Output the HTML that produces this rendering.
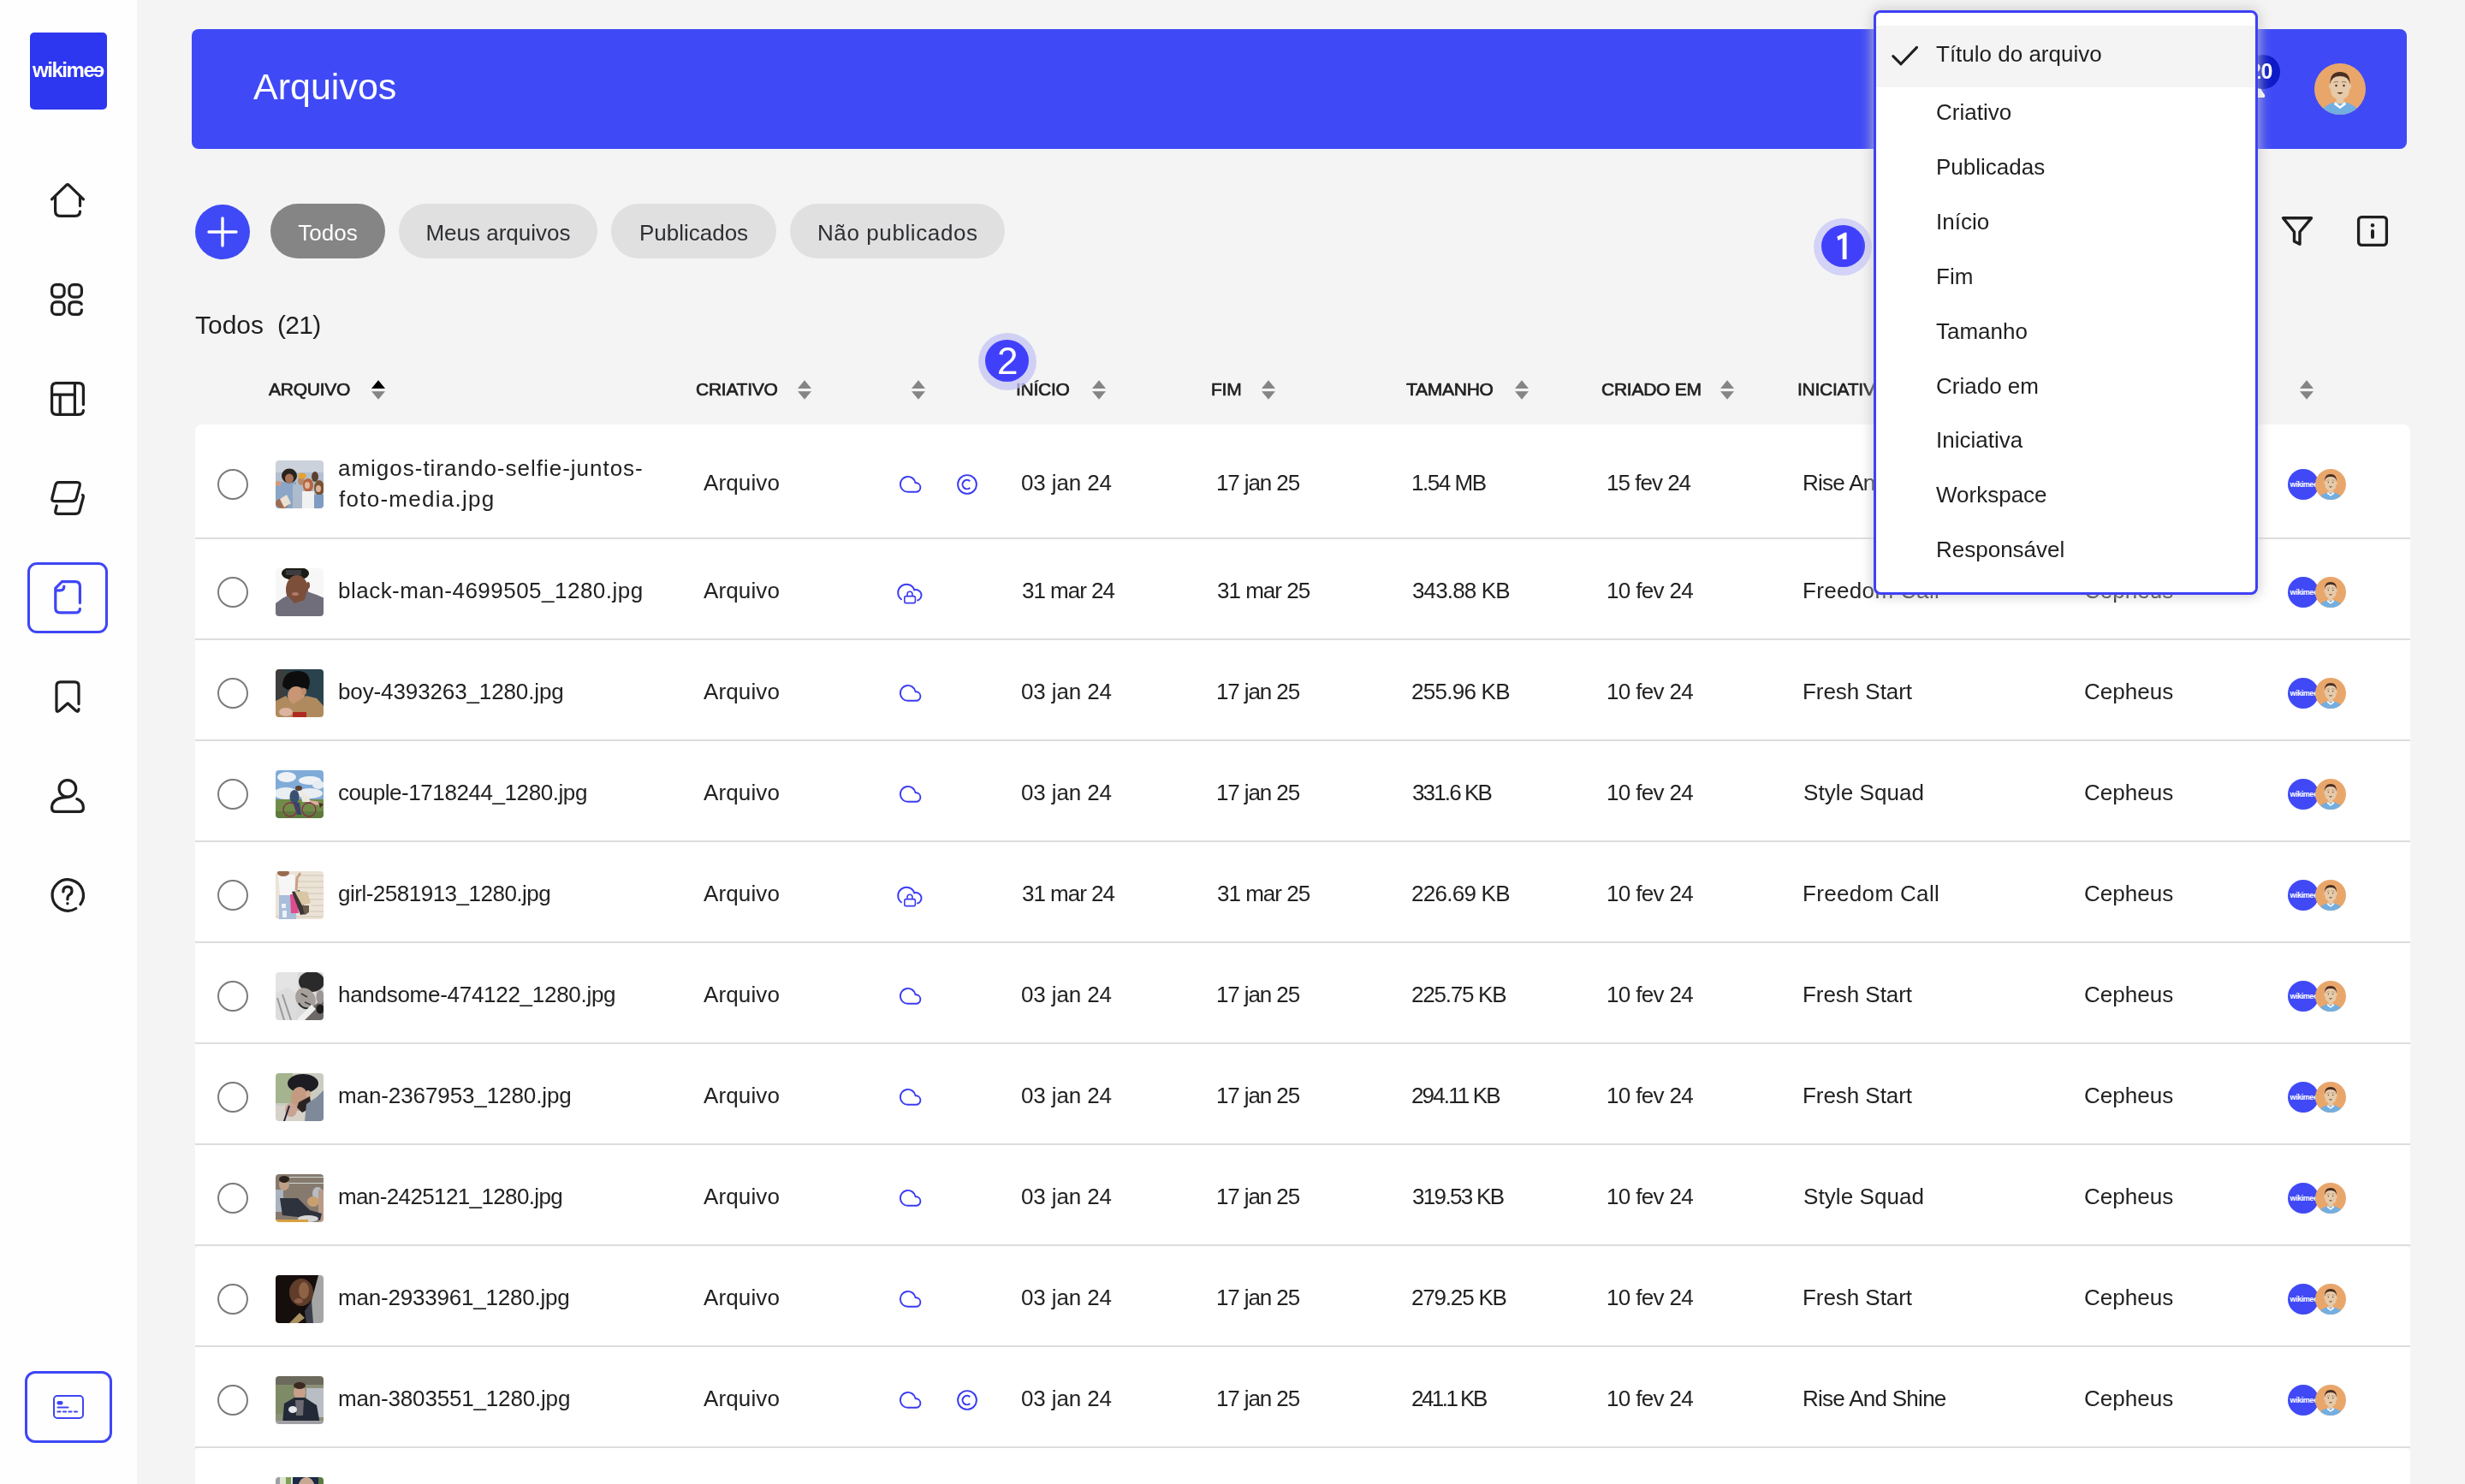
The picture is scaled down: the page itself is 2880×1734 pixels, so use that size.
<!DOCTYPE html><html><head><meta charset="utf-8"><style>html,body{margin:0;padding:0;}body{width:2880px;height:1734px;position:relative;overflow:hidden;background:#f4f4f4;font-family:"Liberation Sans", sans-serif;}.t{position:absolute;white-space:pre;-webkit-font-smoothing:antialiased;will-change:transform;}</style></head><body>
<div style="position:absolute;left:0px;top:0px;width:160px;height:1734px;background:#fefefe;"></div>
<div style="position:absolute;left:35px;top:38px;width:90px;height:90px;background:#2d37f0;border-radius:5px;"></div>
<div class="t" style="left:38.0px;top:70.3px;font-size:24px;line-height:24px;color:#fff;font-weight:700;letter-spacing:-1.45px;">wikime</div>
<div class="t" style="left:109.2px;top:70.3px;font-size:24px;line-height:24px;color:#fff;font-weight:700;letter-spacing:0px;"><span style="display:inline-block;transform:scaleX(-1)">e</span></div>
<svg style="position:absolute;left:59px;top:214px;overflow:visible" width="40" height="40" viewBox="0 0 40 40"><path fill="none" stroke="#1f1f1f" stroke-width="3.2" stroke-linecap="round" stroke-linejoin="round" d="M1.5 18.9 L18.2 2.6 Q20 0.9 21.8 2.6 L38.5 18.9 M5.6 15 V32.5 Q5.6 38.3 11.2 38.3 H28.8 Q34.5 38.3 34.5 33 M34.5 26.6 V15"/></svg>
<svg style="position:absolute;left:59px;top:331px;overflow:visible" width="38" height="38" viewBox="0 0 38 38"><g fill="none" stroke="#1f1f1f" stroke-width="3.2" stroke-linecap="round" stroke-linejoin="round"><rect x="1.6" y="1.6" width="14.5" height="14.5" rx="5"/><rect x="21.9" y="1.6" width="14.5" height="14.5" rx="5"/><rect x="1.6" y="21.9" width="14.5" height="14.5" rx="5"/><path d="M36.2 24.3 Q34.8 21.9 31 21.9 H27 Q21.9 21.9 21.9 27 V31.3 Q21.9 36.4 27 36.4 H31.3 Q36.4 36.4 36.4 31.2"/></g></svg>
<svg style="position:absolute;left:59px;top:446px;overflow:visible" width="40" height="40" viewBox="0 0 40 40"><g fill="none" stroke="#1f1f1f" stroke-width="3.2" stroke-linecap="round" stroke-linejoin="round" stroke-width="2.9"><path d="M38.4 26.7 V7 Q38.4 1.6 33 1.6 H7 Q1.6 1.6 1.6 7 V33 Q1.6 38.4 7 38.4 H33 Q38.4 38.4 38.4 33.5"/><path d="M1.6 15.2 H28.4 M11.2 15.2 V38.4 M28.4 1.6 V38.4"/></g></svg>
<svg style="position:absolute;left:59px;top:562px;overflow:visible" width="40" height="40" viewBox="0 0 40 40"><g fill="none" stroke="#1f1f1f" stroke-width="3.2" stroke-linecap="round" stroke-linejoin="round"><path d="M9.5 1.6 H31 Q35 1.6 34.2 5.5 L30.2 20 Q29.2 23.6 25.5 23.6 H4.8 Q1.2 23.6 1.9 20 L5.7 5.2 Q6.6 1.6 9.5 1.6 Z"/><path d="M7.3 29 L5.8 35 Q5.1 38.4 9 38.4 H29.5 Q33.2 38.4 34 35 L38.3 19 Q38.7 17 37.5 16.4"/></g></svg>
<div style="position:absolute;left:32px;top:657px;width:94px;height:83px;box-sizing:border-box;border:3px solid #3f46f5;border-radius:11px;"></div>
<svg style="position:absolute;left:63px;top:678px;overflow:visible" width="32" height="40" viewBox="0 0 32 40"><g fill="none" stroke="#3f46f5" stroke-width="3.2" stroke-linecap="round" stroke-linejoin="round"><path d="M30.4 26.4 V7 Q30.4 1.6 25 1.6 H9.4 L1.8 9.4 V32.4 Q1.8 37.8 7.2 37.8 H25 Q30.4 37.8 30.4 33.4"/><path d="M11.8 7 Q11.8 11.8 7.6 11.8 H3.6"/></g></svg>
<svg style="position:absolute;left:63px;top:794px;overflow:visible" width="32" height="40" viewBox="0 0 32 40"><path fill="none" stroke="#1f1f1f" stroke-width="3.2" stroke-linecap="round" stroke-linejoin="round" d="M29 28.6 V7.5 Q29 2.8 24.3 2.8 H7.7 Q3 2.8 3 7.5 V35 Q3 39 6.5 36.3 L16.1 27.8 L25.5 36.3 Q29 39 29 34.5"/></svg>
<svg style="position:absolute;left:59px;top:910px;overflow:visible" width="40" height="40" viewBox="0 0 40 40"><g fill="none" stroke="#1f1f1f" stroke-width="3.2" stroke-linecap="round" stroke-linejoin="round"><circle cx="19.9" cy="11.4" r="9.8"/><path d="M20 21.4 Q5.5 22 2.3 29.5 Q1.6 31.5 1.6 34 Q1.6 38.4 6 38.4 H33.8 Q38.4 38.4 38.4 34 Q38.4 26.5 30.8 23.6"/></g></svg>
<svg style="position:absolute;left:59px;top:1026px;overflow:visible" width="40" height="40" viewBox="0 0 40 40"><g fill="none" stroke="#1f1f1f" stroke-width="3.2" stroke-linecap="round" stroke-linejoin="round"><path d="M29.8 35.5 A18.2 18.2 0 1 1 34.9 30.8"/><path d="M14.9 15.9 Q14.9 10.2 20 10.2 Q25 10.2 25 15 Q25 18.5 21.5 20 Q19.9 21 19.9 24.8"/><circle cx="19.9" cy="29.7" r="1.7" fill="#1f1f1f" stroke="none"/></g></svg>
<div style="position:absolute;left:29px;top:1602px;width:102px;height:84px;box-sizing:border-box;border:3px solid #3f46f5;border-radius:12px;"></div>
<svg style="position:absolute;left:62px;top:1630px;overflow:visible" width="36" height="28" viewBox="0 0 36 28"><g fill="none" stroke="#3f46f5" stroke-width="2" stroke-linecap="round"><rect x="1" y="1" width="34" height="26" rx="4"/><path d="M5.5 14.5 H17.5"/><path d="M5.5 19.5 H8.5 M12 19.5 H15 M18.5 19.5 H21.5 M25 19.5 H28" stroke-width="2.2"/></g><rect x="4.5" y="7" width="7" height="4.5" rx="2.2" fill="#3f46f5"/></svg>
<div style="position:absolute;left:224px;top:34px;width:2588px;height:140px;background:#3f4af6;border-radius:8px;"></div>
<div class="t" style="left:296.0px;top:79.6px;font-size:43px;line-height:43px;color:#fff;font-weight:400;letter-spacing:0px;">Arquivos</div>
<svg style="position:absolute;left:2611px;top:78px;overflow:visible" width="40" height="40" viewBox="0 0 40 40"><path fill="#fff" d="M20 4 Q31 4 31 17 V27 L35 33 Q36 36 33 36 H7 Q4 36 5 33 L9 27 V17 Q9 4 20 4 Z"/></svg>
<div style="position:absolute;left:2624px;top:64px;width:40px;height:40px;background:#0d1ac8;border-radius:50%;"></div>
<div class="t" style="left:2628.0px;top:70.8px;font-size:25px;line-height:25px;color:#fff;font-weight:700;letter-spacing:-0.5px;">20</div>
<svg style="position:absolute;left:2704px;top:74px;overflow:visible" width="60" height="60" viewBox="0 0 60 60"><circle cx="30" cy="30" r="30" fill="#e9a66b"/>
<clipPath id="avh"><circle cx="30" cy="30" r="30"/></clipPath>
<g clip-path="url(#avh)">
<ellipse cx="30" cy="61" rx="23" ry="16" fill="#73aee0"/>
<rect x="25.5" y="37" width="9" height="10" fill="#e4c8a8"/>
<path d="M24 45 L30 50 L36 45 L37 48 L30 53 L23 48 Z" fill="#fff"/>
<ellipse cx="19" cy="27" rx="2" ry="3" fill="#e4c8a8"/>
<ellipse cx="41" cy="27" rx="2" ry="3" fill="#e4c8a8"/>
<path d="M19 22 Q19 11 30 11 Q41 11 41 22 V30 Q41 42 30 42 Q19 42 19 30 Z" fill="#e6caa9"/>
<path d="M18.5 24 Q18 10 30 10 Q42 10 41.5 24 Q40 15 30 15 Q20 15 18.5 24 Z" fill="#4a2f22"/>
<circle cx="25.5" cy="26" r="1.2" fill="#3a2a20"/><circle cx="34.5" cy="26" r="1.2" fill="#3a2a20"/><path d="M22.5 22.5 Q25.5 20.5 28 22 M32 22 Q34.5 20.5 37.5 22.5" stroke="#8a6a50" stroke-width="0.9" fill="none"/>
<path d="M26.5 34 Q30 37.5 33.5 34 Z" fill="#3a2a20"/>
</g></svg>
<div style="position:absolute;left:228px;top:239px;width:64px;height:64px;background:#3f4af6;border-radius:50%;"></div>
<svg style="position:absolute;left:228px;top:239px;overflow:visible" width="64" height="64" viewBox="0 0 64 64"><path d="M32 16 V48 M16 32 H48" stroke="#fff" stroke-width="3.4" stroke-linecap="round"/></svg>
<div style="position:absolute;left:316px;top:238px;width:134px;height:64px;background:#858585;border-radius:32px;"></div>
<div class="t" style="left:316px;top:258.5px;width:134px;text-align:center;font-size:26px;line-height:26px;color:#fff;letter-spacing:0px;text-indent:0px;">Todos</div>
<div style="position:absolute;left:466px;top:238px;width:232px;height:64px;background:#e0e0e0;border-radius:32px;"></div>
<div class="t" style="left:466px;top:258.5px;width:232px;text-align:center;font-size:26px;line-height:26px;color:#2e2f33;letter-spacing:0px;text-indent:0px;">Meus arquivos</div>
<div style="position:absolute;left:714px;top:238px;width:193px;height:64px;background:#e0e0e0;border-radius:32px;"></div>
<div class="t" style="left:714px;top:258.5px;width:193px;text-align:center;font-size:26px;line-height:26px;color:#2e2f33;letter-spacing:0px;text-indent:0px;">Publicados</div>
<div style="position:absolute;left:923px;top:238px;width:251px;height:64px;background:#e0e0e0;border-radius:32px;"></div>
<div class="t" style="left:923px;top:258.5px;width:251px;text-align:center;font-size:26px;line-height:26px;color:#2e2f33;letter-spacing:0.6px;text-indent:0.6px;">Não publicados</div>
<div style="position:absolute;left:2119px;top:255px;width:68px;height:67px;background:#d3d3f7;border-radius:50%;"></div>
<div style="position:absolute;left:2128px;top:263px;width:51px;height:49px;background:#4040fb;border-radius:50%;"></div>
<svg style="position:absolute;left:2140px;top:266px;overflow:visible" width="30" height="42" viewBox="0 0 30 42"><path d="M6.3 10.6 L15.2 5.7 H17.5 V36.9 H12.7 V12.2 L7.6 15 Z" fill="#fff"/></svg>
<svg style="position:absolute;left:2664px;top:251px;overflow:visible" width="40" height="40" viewBox="0 0 40 40"><path d="M3.5 3.8 H36.5 L23 20 V34.2 L16.5 31 V20 Z" fill="none" stroke="#1f1f1f" stroke-width="3.4" stroke-linejoin="round"/></svg>
<svg style="position:absolute;left:2752px;top:250px;overflow:visible" width="40" height="40" viewBox="0 0 40 40"><rect x="3.6" y="3.6" width="32.8" height="32.8" rx="3.6" fill="none" stroke="#1f1f1f" stroke-width="3.3"/><circle cx="20" cy="13.2" r="2.2" fill="#1f1f1f"/><path d="M20 20 V27" stroke="#1f1f1f" stroke-width="4" stroke-linecap="round"/></svg>
<div class="t" style="left:228.0px;top:365.0px;font-size:30px;line-height:30px;color:#1f1f1f;font-weight:400;letter-spacing:0px;">Todos</div>
<div class="t" style="left:324.0px;top:365.0px;font-size:30px;line-height:30px;color:#1f1f1f;font-weight:400;letter-spacing:-0.7px;">(21)</div>
<div class="t" style="left:314.0px;top:444.2px;font-size:21px;line-height:21px;color:#222;font-weight:400;letter-spacing:-0.25px;-webkit-text-stroke:0.7px #222;">ARQUIVO</div>
<svg style="position:absolute;left:434px;top:444px;overflow:visible" width="16" height="24" viewBox="0 0 16 24"><path d="M8 0.3 L16 9.9 H0 Z" fill="#000"/><path d="M0 13.2 H16 L8 22.8 Z" fill="#858585"/></svg>
<div class="t" style="left:813.0px;top:444.2px;font-size:21px;line-height:21px;color:#222;font-weight:400;letter-spacing:-0.25px;-webkit-text-stroke:0.7px #222;">CRIATIVO</div>
<svg style="position:absolute;left:932px;top:444px;overflow:visible" width="16" height="24" viewBox="0 0 16 24"><path d="M8 0.3 L16 9.9 H0 Z" fill="#858585"/><path d="M0 13.2 H16 L8 22.8 Z" fill="#858585"/></svg>
<svg style="position:absolute;left:1065px;top:444px;overflow:visible" width="16" height="24" viewBox="0 0 16 24"><path d="M8 0.3 L16 9.9 H0 Z" fill="#858585"/><path d="M0 13.2 H16 L8 22.8 Z" fill="#858585"/></svg>
<div class="t" style="left:1187.0px;top:444.2px;font-size:21px;line-height:21px;color:#222;font-weight:400;letter-spacing:-0.25px;-webkit-text-stroke:0.7px #222;">INÍCIO</div>
<svg style="position:absolute;left:1276px;top:444px;overflow:visible" width="16" height="24" viewBox="0 0 16 24"><path d="M8 0.3 L16 9.9 H0 Z" fill="#858585"/><path d="M0 13.2 H16 L8 22.8 Z" fill="#858585"/></svg>
<div class="t" style="left:1415.0px;top:444.2px;font-size:21px;line-height:21px;color:#222;font-weight:400;letter-spacing:-0.25px;-webkit-text-stroke:0.7px #222;">FIM</div>
<svg style="position:absolute;left:1474px;top:444px;overflow:visible" width="16" height="24" viewBox="0 0 16 24"><path d="M8 0.3 L16 9.9 H0 Z" fill="#858585"/><path d="M0 13.2 H16 L8 22.8 Z" fill="#858585"/></svg>
<div class="t" style="left:1643.0px;top:444.2px;font-size:21px;line-height:21px;color:#222;font-weight:400;letter-spacing:-0.25px;-webkit-text-stroke:0.7px #222;">TAMANHO</div>
<svg style="position:absolute;left:1770px;top:444px;overflow:visible" width="16" height="24" viewBox="0 0 16 24"><path d="M8 0.3 L16 9.9 H0 Z" fill="#858585"/><path d="M0 13.2 H16 L8 22.8 Z" fill="#858585"/></svg>
<div class="t" style="left:1871.0px;top:444.2px;font-size:21px;line-height:21px;color:#222;font-weight:400;letter-spacing:-0.25px;-webkit-text-stroke:0.7px #222;">CRIADO EM</div>
<svg style="position:absolute;left:2010px;top:444px;overflow:visible" width="16" height="24" viewBox="0 0 16 24"><path d="M8 0.3 L16 9.9 H0 Z" fill="#858585"/><path d="M0 13.2 H16 L8 22.8 Z" fill="#858585"/></svg>
<div class="t" style="left:2100.0px;top:444.2px;font-size:21px;line-height:21px;color:#222;font-weight:400;letter-spacing:-0.25px;-webkit-text-stroke:0.7px #222;">INICIATIVA</div>
<svg style="position:absolute;left:2240px;top:444px;overflow:visible" width="16" height="24" viewBox="0 0 16 24"><path d="M8 0.3 L16 9.9 H0 Z" fill="#858585"/><path d="M0 13.2 H16 L8 22.8 Z" fill="#858585"/></svg>
<div class="t" style="left:2428.0px;top:444.2px;font-size:21px;line-height:21px;color:#222;font-weight:400;letter-spacing:-0.25px;-webkit-text-stroke:0.7px #222;">WORKSPACE</div>
<svg style="position:absolute;left:2570px;top:444px;overflow:visible" width="16" height="24" viewBox="0 0 16 24"><path d="M8 0.3 L16 9.9 H0 Z" fill="#858585"/><path d="M0 13.2 H16 L8 22.8 Z" fill="#858585"/></svg>
<svg style="position:absolute;left:2687px;top:444px;overflow:visible" width="16" height="24" viewBox="0 0 16 24"><path d="M8 0.3 L16 9.9 H0 Z" fill="#858585"/><path d="M0 13.2 H16 L8 22.8 Z" fill="#858585"/></svg>
<div style="position:absolute;left:228px;top:496px;width:2588px;height:132px;background:#fff;border-radius:8px 8px 0 0;"></div>
<div style="position:absolute;left:228px;top:628px;width:2588px;height:2px;background:#dddddd;"></div>
<div style="position:absolute;left:254px;top:548.0px;width:36px;height:36px;box-sizing:border-box;border:2px solid #7b7b7b;border-radius:50%;"></div>
<svg style="position:absolute;left:322px;top:538px;overflow:visible" width="56" height="56" viewBox="0 0 56 56"><clipPath id="th0"><rect width="56" height="56" rx="4"/></clipPath><filter id="bl0" x="0" y="0" width="1" height="1"><feGaussianBlur stdDeviation="0.6"/></filter><g clip-path="url(#th0)"><g filter="url(#bl0)"><rect width="56" height="56" fill="#b3c0cf"/><rect width="56" height="14" fill="#cbd2db"/><rect x="0" y="25" width="24" height="31" fill="#8aa5c6"/><ellipse cx="3" cy="27" rx="4" ry="3" fill="#d09a80"/><ellipse cx="16" cy="18" rx="9" ry="8.5" fill="#2a211d"/><ellipse cx="16" cy="21" rx="5" ry="5.5" fill="#a87256"/><rect x="20" y="28" width="14" height="28" fill="#aebbcc"/><ellipse cx="30" cy="24" rx="4" ry="5" fill="#b78a6c"/><ellipse cx="31" cy="18" rx="5" ry="3.5" fill="#e3a235"/><ellipse cx="46" cy="19" rx="4" ry="6" fill="#5c4032"/><ellipse cx="38" cy="29" rx="6" ry="8" fill="#b7653d"/><ellipse cx="37" cy="29" rx="3" ry="4" fill="#e0b7a0"/><rect x="31" y="36" width="14" height="20" fill="#f1f1f1"/><ellipse cx="51" cy="32" rx="6" ry="9" fill="#7a5236"/><ellipse cx="50" cy="33" rx="3" ry="4" fill="#dcb59c"/><rect x="45" y="40" width="11" height="16" fill="#7f9dc2"/><ellipse cx="8" cy="50" rx="8" ry="6" fill="#9f6a4f"/><polygon points="5,45 13,40 18,50 10,55" fill="#e9e0d4"/></g></g></svg>
<div class="t" style="left:394.7px;top:533.6px;font-size:26px;line-height:26px;color:#222;font-weight:400;letter-spacing:0.991px;">amigos-tirando-selfie-juntos-</div>
<div class="t" style="left:395.7px;top:569.7px;font-size:26px;line-height:26px;color:#222;font-weight:400;letter-spacing:1.269px;">foto-media.jpg</div>
<div class="t" style="left:821.5px;top:551.3px;font-size:26px;line-height:26px;color:#222;font-weight:400;letter-spacing:0.134px;">Arquivo</div>
<svg style="position:absolute;left:1050px;top:554.5px;overflow:visible" width="27" height="21" viewBox="0 0 27 21"><path d="M10.7 19.8 H20.8 A5.3 5.3 0 0 0 20.8 9.3 L19.6 9.2 A8.95 8.95 0 1 0 10.7 19.8 Z" fill="none" stroke="#3a3bf3" stroke-width="1.9" stroke-linejoin="round"/></svg>
<svg style="position:absolute;left:1118px;top:554.0px;overflow:visible" width="24" height="24" viewBox="0 0 24 24"><circle cx="12" cy="12" r="10.9" fill="none" stroke="#3a3bf3" stroke-width="1.9"/><path d="M15.3 8.3 A5.2 5.2 0 1 0 15.3 15.9" fill="none" stroke="#3a3bf3" stroke-width="2.1"/></svg>
<div class="t" style="left:1193.0px;top:551.3px;font-size:26px;line-height:26px;color:#222;font-weight:400;letter-spacing:-0.115px;">03 jan 24</div>
<div class="t" style="left:1421.0px;top:551.3px;font-size:26px;line-height:26px;color:#222;font-weight:400;letter-spacing:-1.103px;">17 jan 25</div>
<div class="t" style="left:1649.1px;top:551.3px;font-size:26px;line-height:26px;color:#222;font-weight:400;letter-spacing:-1.464px;">1.54 MB</div>
<div class="t" style="left:1877.2px;top:551.3px;font-size:26px;line-height:26px;color:#222;font-weight:400;letter-spacing:-0.989px;">15 fev 24</div>
<div class="t" style="left:2105.5px;top:551.3px;font-size:26px;line-height:26px;color:#222;font-weight:400;letter-spacing:-0.728px;">Rise And Shine</div>
<div class="t" style="left:2435.3px;top:551.3px;font-size:26px;line-height:26px;color:#222;font-weight:400;letter-spacing:0.021px;">Cepheus</div>
<svg style="position:absolute;left:2673px;top:548.0px;overflow:visible" width="36" height="36" viewBox="0 0 36 36"><circle cx="18" cy="18" r="18" fill="#4049f5"/><text x="2.6" y="21" font-family="Liberation Sans" font-weight="700" font-size="9" fill="#fff" letter-spacing="-0.45">wikimee</text></svg>
<svg style="position:absolute;left:2705px;top:548.0px;overflow:visible" width="36" height="36" viewBox="0 0 60 60"><circle cx="30" cy="30" r="30" fill="#e9a66b"/>
<clipPath id="av0"><circle cx="30" cy="30" r="30"/></clipPath>
<g clip-path="url(#av0)">
<ellipse cx="30" cy="61" rx="23" ry="16" fill="#73aee0"/>
<rect x="25.5" y="37" width="9" height="10" fill="#e4c8a8"/>
<path d="M24 45 L30 50 L36 45 L37 48 L30 53 L23 48 Z" fill="#fff"/>
<ellipse cx="19" cy="27" rx="2" ry="3" fill="#e4c8a8"/>
<ellipse cx="41" cy="27" rx="2" ry="3" fill="#e4c8a8"/>
<path d="M19 22 Q19 11 30 11 Q41 11 41 22 V30 Q41 42 30 42 Q19 42 19 30 Z" fill="#e6caa9"/>
<path d="M18.5 24 Q18 10 30 10 Q42 10 41.5 24 Q40 15 30 15 Q20 15 18.5 24 Z" fill="#4a2f22"/>
<circle cx="25.5" cy="26" r="1.2" fill="#3a2a20"/><circle cx="34.5" cy="26" r="1.2" fill="#3a2a20"/><path d="M22.5 22.5 Q25.5 20.5 28 22 M32 22 Q34.5 20.5 37.5 22.5" stroke="#8a6a50" stroke-width="0.9" fill="none"/>
<path d="M26.5 34 Q30 37.5 33.5 34 Z" fill="#3a2a20"/>
</g></svg>
<div style="position:absolute;left:228px;top:630px;width:2588px;height:116px;background:#fff;"></div>
<div style="position:absolute;left:228px;top:746px;width:2588px;height:2px;background:#dddddd;"></div>
<div style="position:absolute;left:254px;top:674.0px;width:36px;height:36px;box-sizing:border-box;border:2px solid #7b7b7b;border-radius:50%;"></div>
<svg style="position:absolute;left:322px;top:664px;overflow:visible" width="56" height="56" viewBox="0 0 56 56"><clipPath id="th1"><rect width="56" height="56" rx="4"/></clipPath><filter id="bl1" x="0" y="0" width="1" height="1"><feGaussianBlur stdDeviation="0.6"/></filter><g clip-path="url(#th1)"><g filter="url(#bl1)"><rect width="56" height="56" fill="#f7f7f7"/><ellipse cx="23" cy="6" rx="16" ry="8" fill="#1d1a18"/><rect x="12" y="2" width="18" height="6" fill="#3a3a40"/><ellipse cx="25" cy="25" rx="13" ry="17" fill="#7c4f3b"/><ellipse cx="38" cy="20" rx="2" ry="4" fill="#7c4f3b"/><ellipse cx="23" cy="30" rx="4" ry="2" fill="#b2786d"/><polygon points="0,56 0,41 8,35 14,32 22,41 34,37 36.5,27 48,31 56,34.4 56,56" fill="#6f6e7a"/></g></g></svg>
<div class="t" style="left:394.7px;top:677.3px;font-size:26px;line-height:26px;color:#222;font-weight:400;letter-spacing:0.485px;">black-man-4699505_1280.jpg</div>
<div class="t" style="left:821.5px;top:677.3px;font-size:26px;line-height:26px;color:#222;font-weight:400;letter-spacing:0.134px;">Arquivo</div>
<svg style="position:absolute;left:1050px;top:681.0px;overflow:visible" width="30" height="25" viewBox="0 0 30 25"><path d="M3 19.3 A9.8 9.8 0 1 1 18.3 8.4 A5.7 5.7 0 0 1 22.1 20.5" fill="none" stroke="#3a3bf3" stroke-width="2" stroke-linecap="round"/><rect x="6.8" y="15.6" width="12.6" height="8" rx="1.8" fill="#fff" stroke="#3a3bf3" stroke-width="1.6"/><path d="M10 15.6 V13.2 A3 3 0 0 1 16 13.2 V15.6" fill="none" stroke="#3a3bf3" stroke-width="1.6"/></svg>
<div class="t" style="left:1194.0px;top:677.3px;font-size:26px;line-height:26px;color:#222;font-weight:400;letter-spacing:-1.013px;">31 mar 24</div>
<div class="t" style="left:1422.0px;top:677.3px;font-size:26px;line-height:26px;color:#222;font-weight:400;letter-spacing:-0.988px;">31 mar 25</div>
<div class="t" style="left:1650.1px;top:677.3px;font-size:26px;line-height:26px;color:#222;font-weight:400;letter-spacing:-0.861px;">343.88 KB</div>
<div class="t" style="left:1877.2px;top:677.3px;font-size:26px;line-height:26px;color:#222;font-weight:400;letter-spacing:-0.651px;">10 fev 24</div>
<div class="t" style="left:2105.5px;top:677.3px;font-size:26px;line-height:26px;color:#222;font-weight:400;letter-spacing:0.339px;">Freedom Call</div>
<div class="t" style="left:2435.3px;top:677.3px;font-size:26px;line-height:26px;color:#222;font-weight:400;letter-spacing:0.021px;">Cepheus</div>
<svg style="position:absolute;left:2673px;top:674.0px;overflow:visible" width="36" height="36" viewBox="0 0 36 36"><circle cx="18" cy="18" r="18" fill="#4049f5"/><text x="2.6" y="21" font-family="Liberation Sans" font-weight="700" font-size="9" fill="#fff" letter-spacing="-0.45">wikimee</text></svg>
<svg style="position:absolute;left:2705px;top:674.0px;overflow:visible" width="36" height="36" viewBox="0 0 60 60"><circle cx="30" cy="30" r="30" fill="#e9a66b"/>
<clipPath id="av1"><circle cx="30" cy="30" r="30"/></clipPath>
<g clip-path="url(#av1)">
<ellipse cx="30" cy="61" rx="23" ry="16" fill="#73aee0"/>
<rect x="25.5" y="37" width="9" height="10" fill="#e4c8a8"/>
<path d="M24 45 L30 50 L36 45 L37 48 L30 53 L23 48 Z" fill="#fff"/>
<ellipse cx="19" cy="27" rx="2" ry="3" fill="#e4c8a8"/>
<ellipse cx="41" cy="27" rx="2" ry="3" fill="#e4c8a8"/>
<path d="M19 22 Q19 11 30 11 Q41 11 41 22 V30 Q41 42 30 42 Q19 42 19 30 Z" fill="#e6caa9"/>
<path d="M18.5 24 Q18 10 30 10 Q42 10 41.5 24 Q40 15 30 15 Q20 15 18.5 24 Z" fill="#4a2f22"/>
<circle cx="25.5" cy="26" r="1.2" fill="#3a2a20"/><circle cx="34.5" cy="26" r="1.2" fill="#3a2a20"/><path d="M22.5 22.5 Q25.5 20.5 28 22 M32 22 Q34.5 20.5 37.5 22.5" stroke="#8a6a50" stroke-width="0.9" fill="none"/>
<path d="M26.5 34 Q30 37.5 33.5 34 Z" fill="#3a2a20"/>
</g></svg>
<div style="position:absolute;left:228px;top:748px;width:2588px;height:116px;background:#fff;"></div>
<div style="position:absolute;left:228px;top:864px;width:2588px;height:2px;background:#dddddd;"></div>
<div style="position:absolute;left:254px;top:792.0px;width:36px;height:36px;box-sizing:border-box;border:2px solid #7b7b7b;border-radius:50%;"></div>
<svg style="position:absolute;left:322px;top:782px;overflow:visible" width="56" height="56" viewBox="0 0 56 56"><clipPath id="th2"><rect width="56" height="56" rx="4"/></clipPath><filter id="bl2" x="0" y="0" width="1" height="1"><feGaussianBlur stdDeviation="0.6"/></filter><g clip-path="url(#th2)"><g filter="url(#bl2)"><rect width="56" height="56" fill="#2a434c"/><rect width="12" height="40" fill="#3d3d3d"/><path d="M8 20 Q8 2 26 2 Q40 2 40 16 L38 24 Q30 18 14 24 Z" fill="#111"/><ellipse cx="24" cy="31" rx="10" ry="11" fill="#c89575"/><ellipse cx="33" cy="26" rx="3" ry="4" fill="#c08a6a"/><polygon points="0,56 0,37 12,31 20,41 36,31 48,34 56,43 56,56" fill="#b08a5e"/><rect x="20" y="50" width="16" height="6" fill="#b02a20"/><ellipse cx="12" cy="50" rx="8" ry="5" fill="#dcb4a0"/></g></g></svg>
<div class="t" style="left:394.7px;top:795.3px;font-size:26px;line-height:26px;color:#222;font-weight:400;letter-spacing:-0.119px;">boy-4393263_1280.jpg</div>
<div class="t" style="left:821.5px;top:795.3px;font-size:26px;line-height:26px;color:#222;font-weight:400;letter-spacing:0.134px;">Arquivo</div>
<svg style="position:absolute;left:1050px;top:798.5px;overflow:visible" width="27" height="21" viewBox="0 0 27 21"><path d="M10.7 19.8 H20.8 A5.3 5.3 0 0 0 20.8 9.3 L19.6 9.2 A8.95 8.95 0 1 0 10.7 19.8 Z" fill="none" stroke="#3a3bf3" stroke-width="1.9" stroke-linejoin="round"/></svg>
<div class="t" style="left:1193.0px;top:795.3px;font-size:26px;line-height:26px;color:#222;font-weight:400;letter-spacing:-0.115px;">03 jan 24</div>
<div class="t" style="left:1421.0px;top:795.3px;font-size:26px;line-height:26px;color:#222;font-weight:400;letter-spacing:-1.103px;">17 jan 25</div>
<div class="t" style="left:1649.1px;top:795.3px;font-size:26px;line-height:26px;color:#222;font-weight:400;letter-spacing:-0.736px;">255.96 KB</div>
<div class="t" style="left:1877.2px;top:795.3px;font-size:26px;line-height:26px;color:#222;font-weight:400;letter-spacing:-0.651px;">10 fev 24</div>
<div class="t" style="left:2105.5px;top:795.3px;font-size:26px;line-height:26px;color:#222;font-weight:400;letter-spacing:-0.057px;">Fresh Start</div>
<div class="t" style="left:2435.3px;top:795.3px;font-size:26px;line-height:26px;color:#222;font-weight:400;letter-spacing:0.021px;">Cepheus</div>
<svg style="position:absolute;left:2673px;top:792.0px;overflow:visible" width="36" height="36" viewBox="0 0 36 36"><circle cx="18" cy="18" r="18" fill="#4049f5"/><text x="2.6" y="21" font-family="Liberation Sans" font-weight="700" font-size="9" fill="#fff" letter-spacing="-0.45">wikimee</text></svg>
<svg style="position:absolute;left:2705px;top:792.0px;overflow:visible" width="36" height="36" viewBox="0 0 60 60"><circle cx="30" cy="30" r="30" fill="#e9a66b"/>
<clipPath id="av2"><circle cx="30" cy="30" r="30"/></clipPath>
<g clip-path="url(#av2)">
<ellipse cx="30" cy="61" rx="23" ry="16" fill="#73aee0"/>
<rect x="25.5" y="37" width="9" height="10" fill="#e4c8a8"/>
<path d="M24 45 L30 50 L36 45 L37 48 L30 53 L23 48 Z" fill="#fff"/>
<ellipse cx="19" cy="27" rx="2" ry="3" fill="#e4c8a8"/>
<ellipse cx="41" cy="27" rx="2" ry="3" fill="#e4c8a8"/>
<path d="M19 22 Q19 11 30 11 Q41 11 41 22 V30 Q41 42 30 42 Q19 42 19 30 Z" fill="#e6caa9"/>
<path d="M18.5 24 Q18 10 30 10 Q42 10 41.5 24 Q40 15 30 15 Q20 15 18.5 24 Z" fill="#4a2f22"/>
<circle cx="25.5" cy="26" r="1.2" fill="#3a2a20"/><circle cx="34.5" cy="26" r="1.2" fill="#3a2a20"/><path d="M22.5 22.5 Q25.5 20.5 28 22 M32 22 Q34.5 20.5 37.5 22.5" stroke="#8a6a50" stroke-width="0.9" fill="none"/>
<path d="M26.5 34 Q30 37.5 33.5 34 Z" fill="#3a2a20"/>
</g></svg>
<div style="position:absolute;left:228px;top:866px;width:2588px;height:116px;background:#fff;"></div>
<div style="position:absolute;left:228px;top:982px;width:2588px;height:2px;background:#dddddd;"></div>
<div style="position:absolute;left:254px;top:910.0px;width:36px;height:36px;box-sizing:border-box;border:2px solid #7b7b7b;border-radius:50%;"></div>
<svg style="position:absolute;left:322px;top:900px;overflow:visible" width="56" height="56" viewBox="0 0 56 56"><clipPath id="th3"><rect width="56" height="56" rx="4"/></clipPath><filter id="bl3" x="0" y="0" width="1" height="1"><feGaussianBlur stdDeviation="0.6"/></filter><g clip-path="url(#th3)"><g filter="url(#bl3)"><rect width="56" height="56" fill="#80abd8"/><ellipse cx="13" cy="8" rx="11" ry="6" fill="#eef2f6"/><ellipse cx="40" cy="12" rx="13" ry="5" fill="#eef2f6"/><ellipse cx="50" cy="17" rx="7" ry="5" fill="#e6ecf2"/><ellipse cx="12" cy="27" rx="14" ry="7" fill="#e9eef3"/><ellipse cx="40" cy="27" rx="15" ry="6" fill="#e9eef3"/><rect y="34" width="56" height="22" fill="#6f8c48"/><rect y="48" width="56" height="8" fill="#5f7a3c"/><ellipse cx="22" cy="31" rx="5.5" ry="8" fill="#3a5070"/><path d="M20 37 L28 38 L30 52 L25 52 Z" fill="#2f4670"/><ellipse cx="27" cy="21" rx="4" ry="3" fill="#5b4030"/><polygon points="29,24 38,30 41,37 31,37" fill="#eee7dd"/><polygon points="40,35 52,37 54,41 42,40" fill="#d9b09a"/><polygon points="50,37 56,40 52,44" fill="#4a3020"/><circle cx="17" cy="46" r="8" fill="none" stroke="#8a2a4a" stroke-width="1.3"/><circle cx="39" cy="46" r="8" fill="none" stroke="#8a2a4a" stroke-width="1.3"/></g></g></svg>
<div class="t" style="left:394.7px;top:913.3px;font-size:26px;line-height:26px;color:#222;font-weight:400;letter-spacing:-0.425px;">couple-1718244_1280.jpg</div>
<div class="t" style="left:821.5px;top:913.3px;font-size:26px;line-height:26px;color:#222;font-weight:400;letter-spacing:0.134px;">Arquivo</div>
<svg style="position:absolute;left:1050px;top:916.5px;overflow:visible" width="27" height="21" viewBox="0 0 27 21"><path d="M10.7 19.8 H20.8 A5.3 5.3 0 0 0 20.8 9.3 L19.6 9.2 A8.95 8.95 0 1 0 10.7 19.8 Z" fill="none" stroke="#3a3bf3" stroke-width="1.9" stroke-linejoin="round"/></svg>
<div class="t" style="left:1193.0px;top:913.3px;font-size:26px;line-height:26px;color:#222;font-weight:400;letter-spacing:-0.115px;">03 jan 24</div>
<div class="t" style="left:1421.0px;top:913.3px;font-size:26px;line-height:26px;color:#222;font-weight:400;letter-spacing:-1.103px;">17 jan 25</div>
<div class="t" style="left:1650.1px;top:913.3px;font-size:26px;line-height:26px;color:#222;font-weight:400;letter-spacing:-1.861px;">331.6 KB</div>
<div class="t" style="left:1877.2px;top:913.3px;font-size:26px;line-height:26px;color:#222;font-weight:400;letter-spacing:-0.651px;">10 fev 24</div>
<div class="t" style="left:2106.5px;top:913.3px;font-size:26px;line-height:26px;color:#222;font-weight:400;letter-spacing:0.075px;">Style Squad</div>
<div class="t" style="left:2435.3px;top:913.3px;font-size:26px;line-height:26px;color:#222;font-weight:400;letter-spacing:0.021px;">Cepheus</div>
<svg style="position:absolute;left:2673px;top:910.0px;overflow:visible" width="36" height="36" viewBox="0 0 36 36"><circle cx="18" cy="18" r="18" fill="#4049f5"/><text x="2.6" y="21" font-family="Liberation Sans" font-weight="700" font-size="9" fill="#fff" letter-spacing="-0.45">wikimee</text></svg>
<svg style="position:absolute;left:2705px;top:910.0px;overflow:visible" width="36" height="36" viewBox="0 0 60 60"><circle cx="30" cy="30" r="30" fill="#e9a66b"/>
<clipPath id="av3"><circle cx="30" cy="30" r="30"/></clipPath>
<g clip-path="url(#av3)">
<ellipse cx="30" cy="61" rx="23" ry="16" fill="#73aee0"/>
<rect x="25.5" y="37" width="9" height="10" fill="#e4c8a8"/>
<path d="M24 45 L30 50 L36 45 L37 48 L30 53 L23 48 Z" fill="#fff"/>
<ellipse cx="19" cy="27" rx="2" ry="3" fill="#e4c8a8"/>
<ellipse cx="41" cy="27" rx="2" ry="3" fill="#e4c8a8"/>
<path d="M19 22 Q19 11 30 11 Q41 11 41 22 V30 Q41 42 30 42 Q19 42 19 30 Z" fill="#e6caa9"/>
<path d="M18.5 24 Q18 10 30 10 Q42 10 41.5 24 Q40 15 30 15 Q20 15 18.5 24 Z" fill="#4a2f22"/>
<circle cx="25.5" cy="26" r="1.2" fill="#3a2a20"/><circle cx="34.5" cy="26" r="1.2" fill="#3a2a20"/><path d="M22.5 22.5 Q25.5 20.5 28 22 M32 22 Q34.5 20.5 37.5 22.5" stroke="#8a6a50" stroke-width="0.9" fill="none"/>
<path d="M26.5 34 Q30 37.5 33.5 34 Z" fill="#3a2a20"/>
</g></svg>
<div style="position:absolute;left:228px;top:984px;width:2588px;height:116px;background:#fff;"></div>
<div style="position:absolute;left:228px;top:1100px;width:2588px;height:2px;background:#dddddd;"></div>
<div style="position:absolute;left:254px;top:1028.0px;width:36px;height:36px;box-sizing:border-box;border:2px solid #7b7b7b;border-radius:50%;"></div>
<svg style="position:absolute;left:322px;top:1018px;overflow:visible" width="56" height="56" viewBox="0 0 56 56"><clipPath id="th4"><rect width="56" height="56" rx="4"/></clipPath><filter id="bl4" x="0" y="0" width="1" height="1"><feGaussianBlur stdDeviation="0.6"/></filter><g clip-path="url(#th4)"><g filter="url(#bl4)"><rect width="56" height="56" fill="#ebe3d6"/><path d="M26 5 H56 M26 12 H56 M26 19 H56 M30 26 H56 M40 33 H56 M42 40 H56 M40 47 H56 M0 53 H56" stroke="#cbbfad" stroke-width="0.8"/><polygon points="3,4 22,4 24,28 5,28" fill="#f6f6f6"/><ellipse cx="9" cy="2" rx="7" ry="4" fill="#9a6a50"/><path d="M24 22 L25 8 L29 2" stroke="#c8a084" stroke-width="3" fill="none"/><rect x="4" y="28" width="20" height="28" fill="#a8bedb"/><rect x="7" y="38" width="5" height="5" fill="#eef1f6"/><rect x="8" y="46" width="5" height="8" fill="#eef1f6"/><polygon points="17,27 24,27 27,49 18,49" fill="#e04d8e"/><polygon points="19,24 28,22 36,50 29,51" fill="#3b3534"/><polygon points="22,23 37,24 41,37 31,40" fill="#d8c6a4"/><polygon points="31,40 39,40 39,48 34,51" fill="#6a5a4c"/></g></g></svg>
<div class="t" style="left:394.7px;top:1031.3px;font-size:26px;line-height:26px;color:#222;font-weight:400;letter-spacing:-0.5px;">girl-2581913_1280.jpg</div>
<div class="t" style="left:821.5px;top:1031.3px;font-size:26px;line-height:26px;color:#222;font-weight:400;letter-spacing:0.134px;">Arquivo</div>
<svg style="position:absolute;left:1050px;top:1035.0px;overflow:visible" width="30" height="25" viewBox="0 0 30 25"><path d="M3 19.3 A9.8 9.8 0 1 1 18.3 8.4 A5.7 5.7 0 0 1 22.1 20.5" fill="none" stroke="#3a3bf3" stroke-width="2" stroke-linecap="round"/><rect x="6.8" y="15.6" width="12.6" height="8" rx="1.8" fill="#fff" stroke="#3a3bf3" stroke-width="1.6"/><path d="M10 15.6 V13.2 A3 3 0 0 1 16 13.2 V15.6" fill="none" stroke="#3a3bf3" stroke-width="1.6"/></svg>
<div class="t" style="left:1194.0px;top:1031.3px;font-size:26px;line-height:26px;color:#222;font-weight:400;letter-spacing:-1.013px;">31 mar 24</div>
<div class="t" style="left:1422.0px;top:1031.3px;font-size:26px;line-height:26px;color:#222;font-weight:400;letter-spacing:-0.988px;">31 mar 25</div>
<div class="t" style="left:1649.1px;top:1031.3px;font-size:26px;line-height:26px;color:#222;font-weight:400;letter-spacing:-0.736px;">226.69 KB</div>
<div class="t" style="left:1877.2px;top:1031.3px;font-size:26px;line-height:26px;color:#222;font-weight:400;letter-spacing:-0.651px;">10 fev 24</div>
<div class="t" style="left:2105.5px;top:1031.3px;font-size:26px;line-height:26px;color:#222;font-weight:400;letter-spacing:0.339px;">Freedom Call</div>
<div class="t" style="left:2435.3px;top:1031.3px;font-size:26px;line-height:26px;color:#222;font-weight:400;letter-spacing:0.021px;">Cepheus</div>
<svg style="position:absolute;left:2673px;top:1028.0px;overflow:visible" width="36" height="36" viewBox="0 0 36 36"><circle cx="18" cy="18" r="18" fill="#4049f5"/><text x="2.6" y="21" font-family="Liberation Sans" font-weight="700" font-size="9" fill="#fff" letter-spacing="-0.45">wikimee</text></svg>
<svg style="position:absolute;left:2705px;top:1028.0px;overflow:visible" width="36" height="36" viewBox="0 0 60 60"><circle cx="30" cy="30" r="30" fill="#e9a66b"/>
<clipPath id="av4"><circle cx="30" cy="30" r="30"/></clipPath>
<g clip-path="url(#av4)">
<ellipse cx="30" cy="61" rx="23" ry="16" fill="#73aee0"/>
<rect x="25.5" y="37" width="9" height="10" fill="#e4c8a8"/>
<path d="M24 45 L30 50 L36 45 L37 48 L30 53 L23 48 Z" fill="#fff"/>
<ellipse cx="19" cy="27" rx="2" ry="3" fill="#e4c8a8"/>
<ellipse cx="41" cy="27" rx="2" ry="3" fill="#e4c8a8"/>
<path d="M19 22 Q19 11 30 11 Q41 11 41 22 V30 Q41 42 30 42 Q19 42 19 30 Z" fill="#e6caa9"/>
<path d="M18.5 24 Q18 10 30 10 Q42 10 41.5 24 Q40 15 30 15 Q20 15 18.5 24 Z" fill="#4a2f22"/>
<circle cx="25.5" cy="26" r="1.2" fill="#3a2a20"/><circle cx="34.5" cy="26" r="1.2" fill="#3a2a20"/><path d="M22.5 22.5 Q25.5 20.5 28 22 M32 22 Q34.5 20.5 37.5 22.5" stroke="#8a6a50" stroke-width="0.9" fill="none"/>
<path d="M26.5 34 Q30 37.5 33.5 34 Z" fill="#3a2a20"/>
</g></svg>
<div style="position:absolute;left:228px;top:1102px;width:2588px;height:116px;background:#fff;"></div>
<div style="position:absolute;left:228px;top:1218px;width:2588px;height:2px;background:#dddddd;"></div>
<div style="position:absolute;left:254px;top:1146.0px;width:36px;height:36px;box-sizing:border-box;border:2px solid #7b7b7b;border-radius:50%;"></div>
<svg style="position:absolute;left:322px;top:1136px;overflow:visible" width="56" height="56" viewBox="0 0 56 56"><clipPath id="th5"><rect width="56" height="56" rx="4"/></clipPath><filter id="bl5" x="0" y="0" width="1" height="1"><feGaussianBlur stdDeviation="0.6"/></filter><g clip-path="url(#th5)"><g filter="url(#bl5)"><rect width="56" height="56" fill="#d9d9d9"/><rect width="26" height="24" fill="#e4e4e4"/><polygon points="0,24 14,18 26,26 24,56 0,56" fill="#dcdcdc"/><path d="M2 30 L10 56 M8 26 L18 56" stroke="#9a9a9a" stroke-width="2"/><ellipse cx="42" cy="11" rx="15" ry="12" fill="#2a2a2a"/><ellipse cx="35" cy="31" rx="11" ry="13.5" fill="#a6a09c" transform="rotate(-35 35 31)"/><path d="M30 25 L37 29 M34 35 L41 38" stroke="#3a3a3a" stroke-width="1.6"/><path d="M27 36 Q31 43 38 42" stroke="#2a2a2a" stroke-width="1.8" fill="none"/><polygon points="30,56 44,40 56,30 56,56" fill="#6e6866"/><polygon points="26,54 42,38 47,43 34,56 26,56" fill="#efefef"/><ellipse cx="52" cy="29" rx="4.5" ry="8" fill="#9c9694"/><ellipse cx="52" cy="43" rx="4.5" ry="5.5" fill="#1e1e1e"/></g></g></svg>
<div class="t" style="left:394.7px;top:1149.3px;font-size:26px;line-height:26px;color:#222;font-weight:400;letter-spacing:-0.282px;">handsome-474122_1280.jpg</div>
<div class="t" style="left:821.5px;top:1149.3px;font-size:26px;line-height:26px;color:#222;font-weight:400;letter-spacing:0.134px;">Arquivo</div>
<svg style="position:absolute;left:1050px;top:1152.5px;overflow:visible" width="27" height="21" viewBox="0 0 27 21"><path d="M10.7 19.8 H20.8 A5.3 5.3 0 0 0 20.8 9.3 L19.6 9.2 A8.95 8.95 0 1 0 10.7 19.8 Z" fill="none" stroke="#3a3bf3" stroke-width="1.9" stroke-linejoin="round"/></svg>
<div class="t" style="left:1193.0px;top:1149.3px;font-size:26px;line-height:26px;color:#222;font-weight:400;letter-spacing:-0.115px;">03 jan 24</div>
<div class="t" style="left:1421.0px;top:1149.3px;font-size:26px;line-height:26px;color:#222;font-weight:400;letter-spacing:-1.103px;">17 jan 25</div>
<div class="t" style="left:1649.1px;top:1149.3px;font-size:26px;line-height:26px;color:#222;font-weight:400;letter-spacing:-1.236px;">225.75 KB</div>
<div class="t" style="left:1877.2px;top:1149.3px;font-size:26px;line-height:26px;color:#222;font-weight:400;letter-spacing:-0.651px;">10 fev 24</div>
<div class="t" style="left:2105.5px;top:1149.3px;font-size:26px;line-height:26px;color:#222;font-weight:400;letter-spacing:-0.057px;">Fresh Start</div>
<div class="t" style="left:2435.3px;top:1149.3px;font-size:26px;line-height:26px;color:#222;font-weight:400;letter-spacing:0.021px;">Cepheus</div>
<svg style="position:absolute;left:2673px;top:1146.0px;overflow:visible" width="36" height="36" viewBox="0 0 36 36"><circle cx="18" cy="18" r="18" fill="#4049f5"/><text x="2.6" y="21" font-family="Liberation Sans" font-weight="700" font-size="9" fill="#fff" letter-spacing="-0.45">wikimee</text></svg>
<svg style="position:absolute;left:2705px;top:1146.0px;overflow:visible" width="36" height="36" viewBox="0 0 60 60"><circle cx="30" cy="30" r="30" fill="#e9a66b"/>
<clipPath id="av5"><circle cx="30" cy="30" r="30"/></clipPath>
<g clip-path="url(#av5)">
<ellipse cx="30" cy="61" rx="23" ry="16" fill="#73aee0"/>
<rect x="25.5" y="37" width="9" height="10" fill="#e4c8a8"/>
<path d="M24 45 L30 50 L36 45 L37 48 L30 53 L23 48 Z" fill="#fff"/>
<ellipse cx="19" cy="27" rx="2" ry="3" fill="#e4c8a8"/>
<ellipse cx="41" cy="27" rx="2" ry="3" fill="#e4c8a8"/>
<path d="M19 22 Q19 11 30 11 Q41 11 41 22 V30 Q41 42 30 42 Q19 42 19 30 Z" fill="#e6caa9"/>
<path d="M18.5 24 Q18 10 30 10 Q42 10 41.5 24 Q40 15 30 15 Q20 15 18.5 24 Z" fill="#4a2f22"/>
<circle cx="25.5" cy="26" r="1.2" fill="#3a2a20"/><circle cx="34.5" cy="26" r="1.2" fill="#3a2a20"/><path d="M22.5 22.5 Q25.5 20.5 28 22 M32 22 Q34.5 20.5 37.5 22.5" stroke="#8a6a50" stroke-width="0.9" fill="none"/>
<path d="M26.5 34 Q30 37.5 33.5 34 Z" fill="#3a2a20"/>
</g></svg>
<div style="position:absolute;left:228px;top:1220px;width:2588px;height:116px;background:#fff;"></div>
<div style="position:absolute;left:228px;top:1336px;width:2588px;height:2px;background:#dddddd;"></div>
<div style="position:absolute;left:254px;top:1264.0px;width:36px;height:36px;box-sizing:border-box;border:2px solid #7b7b7b;border-radius:50%;"></div>
<svg style="position:absolute;left:322px;top:1254px;overflow:visible" width="56" height="56" viewBox="0 0 56 56"><clipPath id="th6"><rect width="56" height="56" rx="4"/></clipPath><filter id="bl6" x="0" y="0" width="1" height="1"><feGaussianBlur stdDeviation="0.6"/></filter><g clip-path="url(#th6)"><g filter="url(#bl6)"><rect width="56" height="56" fill="#c9ccbf"/><rect width="20" height="35" fill="#a4b48e"/><rect y="38" width="56" height="18" fill="#d6d2ca"/><ellipse cx="32" cy="12" rx="18" ry="11" fill="#1b1c20"/><ellipse cx="28" cy="30" rx="10" ry="14" fill="#c49a80"/><ellipse cx="38" cy="25" rx="3" ry="5" fill="#d0a890"/><path d="M27 34 L40 27 L42 40 L31 46 L25 40 Z" fill="#2a2420"/><path d="M34 56 L36 36 L48 28 L56 20 L56 56 Z" fill="#7e8a9a"/><ellipse cx="18" cy="43" rx="7" ry="8" fill="#c8a292"/><path d="M16 38 L10 56" stroke="#223" stroke-width="2"/></g></g></svg>
<div class="t" style="left:394.7px;top:1267.3px;font-size:26px;line-height:26px;color:#222;font-weight:400;letter-spacing:-0.101px;">man-2367953_1280.jpg</div>
<div class="t" style="left:821.5px;top:1267.3px;font-size:26px;line-height:26px;color:#222;font-weight:400;letter-spacing:0.134px;">Arquivo</div>
<svg style="position:absolute;left:1050px;top:1270.5px;overflow:visible" width="27" height="21" viewBox="0 0 27 21"><path d="M10.7 19.8 H20.8 A5.3 5.3 0 0 0 20.8 9.3 L19.6 9.2 A8.95 8.95 0 1 0 10.7 19.8 Z" fill="none" stroke="#3a3bf3" stroke-width="1.9" stroke-linejoin="round"/></svg>
<div class="t" style="left:1193.0px;top:1267.3px;font-size:26px;line-height:26px;color:#222;font-weight:400;letter-spacing:-0.115px;">03 jan 24</div>
<div class="t" style="left:1421.0px;top:1267.3px;font-size:26px;line-height:26px;color:#222;font-weight:400;letter-spacing:-1.103px;">17 jan 25</div>
<div class="t" style="left:1649.1px;top:1267.3px;font-size:26px;line-height:26px;color:#222;font-weight:400;letter-spacing:-1.857px;">294.11 KB</div>
<div class="t" style="left:1877.2px;top:1267.3px;font-size:26px;line-height:26px;color:#222;font-weight:400;letter-spacing:-0.651px;">10 fev 24</div>
<div class="t" style="left:2105.5px;top:1267.3px;font-size:26px;line-height:26px;color:#222;font-weight:400;letter-spacing:-0.057px;">Fresh Start</div>
<div class="t" style="left:2435.3px;top:1267.3px;font-size:26px;line-height:26px;color:#222;font-weight:400;letter-spacing:0.021px;">Cepheus</div>
<svg style="position:absolute;left:2673px;top:1264.0px;overflow:visible" width="36" height="36" viewBox="0 0 36 36"><circle cx="18" cy="18" r="18" fill="#4049f5"/><text x="2.6" y="21" font-family="Liberation Sans" font-weight="700" font-size="9" fill="#fff" letter-spacing="-0.45">wikimee</text></svg>
<svg style="position:absolute;left:2705px;top:1264.0px;overflow:visible" width="36" height="36" viewBox="0 0 60 60"><circle cx="30" cy="30" r="30" fill="#e9a66b"/>
<clipPath id="av6"><circle cx="30" cy="30" r="30"/></clipPath>
<g clip-path="url(#av6)">
<ellipse cx="30" cy="61" rx="23" ry="16" fill="#73aee0"/>
<rect x="25.5" y="37" width="9" height="10" fill="#e4c8a8"/>
<path d="M24 45 L30 50 L36 45 L37 48 L30 53 L23 48 Z" fill="#fff"/>
<ellipse cx="19" cy="27" rx="2" ry="3" fill="#e4c8a8"/>
<ellipse cx="41" cy="27" rx="2" ry="3" fill="#e4c8a8"/>
<path d="M19 22 Q19 11 30 11 Q41 11 41 22 V30 Q41 42 30 42 Q19 42 19 30 Z" fill="#e6caa9"/>
<path d="M18.5 24 Q18 10 30 10 Q42 10 41.5 24 Q40 15 30 15 Q20 15 18.5 24 Z" fill="#4a2f22"/>
<circle cx="25.5" cy="26" r="1.2" fill="#3a2a20"/><circle cx="34.5" cy="26" r="1.2" fill="#3a2a20"/><path d="M22.5 22.5 Q25.5 20.5 28 22 M32 22 Q34.5 20.5 37.5 22.5" stroke="#8a6a50" stroke-width="0.9" fill="none"/>
<path d="M26.5 34 Q30 37.5 33.5 34 Z" fill="#3a2a20"/>
</g></svg>
<div style="position:absolute;left:228px;top:1338px;width:2588px;height:116px;background:#fff;"></div>
<div style="position:absolute;left:228px;top:1454px;width:2588px;height:2px;background:#dddddd;"></div>
<div style="position:absolute;left:254px;top:1382.0px;width:36px;height:36px;box-sizing:border-box;border:2px solid #7b7b7b;border-radius:50%;"></div>
<svg style="position:absolute;left:322px;top:1372px;overflow:visible" width="56" height="56" viewBox="0 0 56 56"><clipPath id="th7"><rect width="56" height="56" rx="4"/></clipPath><filter id="bl7" x="0" y="0" width="1" height="1"><feGaussianBlur stdDeviation="0.6"/></filter><g clip-path="url(#th7)"><g filter="url(#bl7)"><rect width="56" height="56" fill="#867a6e"/><path d="M16 3.5 H56 M16 10.5 H56" stroke="#cfd8d2" stroke-width="1.2"/><rect x="0" y="18" width="9" height="26" fill="#aab4c0"/><ellipse cx="10" cy="12" rx="6" ry="7" fill="#c0a088"/><ellipse cx="10" cy="6" rx="6" ry="4" fill="#2a221c"/><ellipse cx="49" cy="23" rx="6" ry="8" fill="#b8bcc4"/><ellipse cx="44" cy="32" rx="7" ry="6" fill="#c8a070"/><rect x="50" y="18" width="6" height="38" fill="#b89a88"/><path d="M5 28 L26 28 L40 42 L54 46 L52 54 L26 50 L8 48 Z" fill="#2f323c"/><ellipse cx="38" cy="52" rx="12" ry="4" fill="#d6d6d8"/><rect x="0" y="53" width="38" height="3" fill="#d8a040"/></g></g></svg>
<div class="t" style="left:394.7px;top:1385.3px;font-size:26px;line-height:26px;color:#222;font-weight:400;letter-spacing:-0.627px;">man-2425121_1280.jpg</div>
<div class="t" style="left:821.5px;top:1385.3px;font-size:26px;line-height:26px;color:#222;font-weight:400;letter-spacing:0.134px;">Arquivo</div>
<svg style="position:absolute;left:1050px;top:1388.5px;overflow:visible" width="27" height="21" viewBox="0 0 27 21"><path d="M10.7 19.8 H20.8 A5.3 5.3 0 0 0 20.8 9.3 L19.6 9.2 A8.95 8.95 0 1 0 10.7 19.8 Z" fill="none" stroke="#3a3bf3" stroke-width="1.9" stroke-linejoin="round"/></svg>
<div class="t" style="left:1193.0px;top:1385.3px;font-size:26px;line-height:26px;color:#222;font-weight:400;letter-spacing:-0.115px;">03 jan 24</div>
<div class="t" style="left:1421.0px;top:1385.3px;font-size:26px;line-height:26px;color:#222;font-weight:400;letter-spacing:-1.103px;">17 jan 25</div>
<div class="t" style="left:1650.1px;top:1385.3px;font-size:26px;line-height:26px;color:#222;font-weight:400;letter-spacing:-1.661px;">319.53 KB</div>
<div class="t" style="left:1877.2px;top:1385.3px;font-size:26px;line-height:26px;color:#222;font-weight:400;letter-spacing:-0.651px;">10 fev 24</div>
<div class="t" style="left:2106.5px;top:1385.3px;font-size:26px;line-height:26px;color:#222;font-weight:400;letter-spacing:0.075px;">Style Squad</div>
<div class="t" style="left:2435.3px;top:1385.3px;font-size:26px;line-height:26px;color:#222;font-weight:400;letter-spacing:0.021px;">Cepheus</div>
<svg style="position:absolute;left:2673px;top:1382.0px;overflow:visible" width="36" height="36" viewBox="0 0 36 36"><circle cx="18" cy="18" r="18" fill="#4049f5"/><text x="2.6" y="21" font-family="Liberation Sans" font-weight="700" font-size="9" fill="#fff" letter-spacing="-0.45">wikimee</text></svg>
<svg style="position:absolute;left:2705px;top:1382.0px;overflow:visible" width="36" height="36" viewBox="0 0 60 60"><circle cx="30" cy="30" r="30" fill="#e9a66b"/>
<clipPath id="av7"><circle cx="30" cy="30" r="30"/></clipPath>
<g clip-path="url(#av7)">
<ellipse cx="30" cy="61" rx="23" ry="16" fill="#73aee0"/>
<rect x="25.5" y="37" width="9" height="10" fill="#e4c8a8"/>
<path d="M24 45 L30 50 L36 45 L37 48 L30 53 L23 48 Z" fill="#fff"/>
<ellipse cx="19" cy="27" rx="2" ry="3" fill="#e4c8a8"/>
<ellipse cx="41" cy="27" rx="2" ry="3" fill="#e4c8a8"/>
<path d="M19 22 Q19 11 30 11 Q41 11 41 22 V30 Q41 42 30 42 Q19 42 19 30 Z" fill="#e6caa9"/>
<path d="M18.5 24 Q18 10 30 10 Q42 10 41.5 24 Q40 15 30 15 Q20 15 18.5 24 Z" fill="#4a2f22"/>
<circle cx="25.5" cy="26" r="1.2" fill="#3a2a20"/><circle cx="34.5" cy="26" r="1.2" fill="#3a2a20"/><path d="M22.5 22.5 Q25.5 20.5 28 22 M32 22 Q34.5 20.5 37.5 22.5" stroke="#8a6a50" stroke-width="0.9" fill="none"/>
<path d="M26.5 34 Q30 37.5 33.5 34 Z" fill="#3a2a20"/>
</g></svg>
<div style="position:absolute;left:228px;top:1456px;width:2588px;height:116px;background:#fff;border-radius:5px 5px 0 0;"></div>
<div style="position:absolute;left:228px;top:1572px;width:2588px;height:2px;background:#dddddd;"></div>
<div style="position:absolute;left:254px;top:1500.0px;width:36px;height:36px;box-sizing:border-box;border:2px solid #7b7b7b;border-radius:50%;"></div>
<svg style="position:absolute;left:322px;top:1490px;overflow:visible" width="56" height="56" viewBox="0 0 56 56"><clipPath id="th8"><rect width="56" height="56" rx="4"/></clipPath><filter id="bl8" x="0" y="0" width="1" height="1"><feGaussianBlur stdDeviation="0.6"/></filter><g clip-path="url(#th8)"><g filter="url(#bl8)"><rect width="56" height="56" fill="#130f0b"/><ellipse cx="30" cy="20" rx="14" ry="16" fill="#5e3d2a"/><ellipse cx="33" cy="18" rx="6" ry="10" fill="#8e6444"/><ellipse cx="27" cy="30" rx="5" ry="3" fill="#8f5c4c"/><polygon points="50,0 56,0 56,56 42,56 42,30" fill="#a6a6a6"/><polygon points="34,42 42,30 44,56 36,56" fill="#3a3e48"/><polygon points="16,56 28,44 34,50 26,56" fill="#a89060"/></g></g></svg>
<div class="t" style="left:394.7px;top:1503.3px;font-size:26px;line-height:26px;color:#222;font-weight:400;letter-spacing:-0.206px;">man-2933961_1280.jpg</div>
<div class="t" style="left:821.5px;top:1503.3px;font-size:26px;line-height:26px;color:#222;font-weight:400;letter-spacing:0.134px;">Arquivo</div>
<svg style="position:absolute;left:1050px;top:1506.5px;overflow:visible" width="27" height="21" viewBox="0 0 27 21"><path d="M10.7 19.8 H20.8 A5.3 5.3 0 0 0 20.8 9.3 L19.6 9.2 A8.95 8.95 0 1 0 10.7 19.8 Z" fill="none" stroke="#3a3bf3" stroke-width="1.9" stroke-linejoin="round"/></svg>
<div class="t" style="left:1193.0px;top:1503.3px;font-size:26px;line-height:26px;color:#222;font-weight:400;letter-spacing:-0.115px;">03 jan 24</div>
<div class="t" style="left:1421.0px;top:1503.3px;font-size:26px;line-height:26px;color:#222;font-weight:400;letter-spacing:-1.103px;">17 jan 25</div>
<div class="t" style="left:1649.1px;top:1503.3px;font-size:26px;line-height:26px;color:#222;font-weight:400;letter-spacing:-1.186px;">279.25 KB</div>
<div class="t" style="left:1877.2px;top:1503.3px;font-size:26px;line-height:26px;color:#222;font-weight:400;letter-spacing:-0.651px;">10 fev 24</div>
<div class="t" style="left:2105.5px;top:1503.3px;font-size:26px;line-height:26px;color:#222;font-weight:400;letter-spacing:-0.057px;">Fresh Start</div>
<div class="t" style="left:2435.3px;top:1503.3px;font-size:26px;line-height:26px;color:#222;font-weight:400;letter-spacing:0.021px;">Cepheus</div>
<svg style="position:absolute;left:2673px;top:1500.0px;overflow:visible" width="36" height="36" viewBox="0 0 36 36"><circle cx="18" cy="18" r="18" fill="#4049f5"/><text x="2.6" y="21" font-family="Liberation Sans" font-weight="700" font-size="9" fill="#fff" letter-spacing="-0.45">wikimee</text></svg>
<svg style="position:absolute;left:2705px;top:1500.0px;overflow:visible" width="36" height="36" viewBox="0 0 60 60"><circle cx="30" cy="30" r="30" fill="#e9a66b"/>
<clipPath id="av8"><circle cx="30" cy="30" r="30"/></clipPath>
<g clip-path="url(#av8)">
<ellipse cx="30" cy="61" rx="23" ry="16" fill="#73aee0"/>
<rect x="25.5" y="37" width="9" height="10" fill="#e4c8a8"/>
<path d="M24 45 L30 50 L36 45 L37 48 L30 53 L23 48 Z" fill="#fff"/>
<ellipse cx="19" cy="27" rx="2" ry="3" fill="#e4c8a8"/>
<ellipse cx="41" cy="27" rx="2" ry="3" fill="#e4c8a8"/>
<path d="M19 22 Q19 11 30 11 Q41 11 41 22 V30 Q41 42 30 42 Q19 42 19 30 Z" fill="#e6caa9"/>
<path d="M18.5 24 Q18 10 30 10 Q42 10 41.5 24 Q40 15 30 15 Q20 15 18.5 24 Z" fill="#4a2f22"/>
<circle cx="25.5" cy="26" r="1.2" fill="#3a2a20"/><circle cx="34.5" cy="26" r="1.2" fill="#3a2a20"/><path d="M22.5 22.5 Q25.5 20.5 28 22 M32 22 Q34.5 20.5 37.5 22.5" stroke="#8a6a50" stroke-width="0.9" fill="none"/>
<path d="M26.5 34 Q30 37.5 33.5 34 Z" fill="#3a2a20"/>
</g></svg>
<div style="position:absolute;left:228px;top:1574px;width:2588px;height:116px;background:#fff;"></div>
<div style="position:absolute;left:228px;top:1690px;width:2588px;height:2px;background:#dddddd;"></div>
<div style="position:absolute;left:254px;top:1618.0px;width:36px;height:36px;box-sizing:border-box;border:2px solid #7b7b7b;border-radius:50%;"></div>
<svg style="position:absolute;left:322px;top:1608px;overflow:visible" width="56" height="56" viewBox="0 0 56 56"><clipPath id="th9"><rect width="56" height="56" rx="4"/></clipPath><filter id="bl9" x="0" y="0" width="1" height="1"><feGaussianBlur stdDeviation="0.6"/></filter><g clip-path="url(#th9)"><g filter="url(#bl9)"><rect width="56" height="56" fill="#8c9078"/><rect width="56" height="10" fill="#6c6a5c"/><rect x="36" y="14" width="20" height="34" fill="#b9bec4"/><rect x="0" y="10" width="22" height="34" fill="#7f8a66"/><ellipse cx="28" cy="19" rx="7" ry="9" fill="#c8a08a"/><ellipse cx="28" cy="11" rx="7" ry="4" fill="#3a2a20"/><path d="M8 56 L10 32 L22 25 L34 25 L48 34 L52 56 Z" fill="#222a38"/><polygon points="23,28 33,28 32,46 24,46" fill="#6a6a70"/><ellipse cx="20" cy="39" rx="5" ry="4" fill="#e8e8ec"/><rect y="52" width="56" height="4" fill="#a0a0a4"/></g></g></svg>
<div class="t" style="left:394.7px;top:1621.3px;font-size:26px;line-height:26px;color:#222;font-weight:400;letter-spacing:-0.175px;">man-3803551_1280.jpg</div>
<div class="t" style="left:821.5px;top:1621.3px;font-size:26px;line-height:26px;color:#222;font-weight:400;letter-spacing:0.134px;">Arquivo</div>
<svg style="position:absolute;left:1050px;top:1624.5px;overflow:visible" width="27" height="21" viewBox="0 0 27 21"><path d="M10.7 19.8 H20.8 A5.3 5.3 0 0 0 20.8 9.3 L19.6 9.2 A8.95 8.95 0 1 0 10.7 19.8 Z" fill="none" stroke="#3a3bf3" stroke-width="1.9" stroke-linejoin="round"/></svg>
<svg style="position:absolute;left:1118px;top:1624.0px;overflow:visible" width="24" height="24" viewBox="0 0 24 24"><circle cx="12" cy="12" r="10.9" fill="none" stroke="#3a3bf3" stroke-width="1.9"/><path d="M15.3 8.3 A5.2 5.2 0 1 0 15.3 15.9" fill="none" stroke="#3a3bf3" stroke-width="2.1"/></svg>
<div class="t" style="left:1193.0px;top:1621.3px;font-size:26px;line-height:26px;color:#222;font-weight:400;letter-spacing:-0.115px;">03 jan 24</div>
<div class="t" style="left:1421.0px;top:1621.3px;font-size:26px;line-height:26px;color:#222;font-weight:400;letter-spacing:-1.103px;">17 jan 25</div>
<div class="t" style="left:1649.1px;top:1621.3px;font-size:26px;line-height:26px;color:#222;font-weight:400;letter-spacing:-2.533px;">241.1 KB</div>
<div class="t" style="left:1877.2px;top:1621.3px;font-size:26px;line-height:26px;color:#222;font-weight:400;letter-spacing:-0.651px;">10 fev 24</div>
<div class="t" style="left:2105.5px;top:1621.3px;font-size:26px;line-height:26px;color:#222;font-weight:400;letter-spacing:-0.728px;">Rise And Shine</div>
<div class="t" style="left:2435.3px;top:1621.3px;font-size:26px;line-height:26px;color:#222;font-weight:400;letter-spacing:0.021px;">Cepheus</div>
<svg style="position:absolute;left:2673px;top:1618.0px;overflow:visible" width="36" height="36" viewBox="0 0 36 36"><circle cx="18" cy="18" r="18" fill="#4049f5"/><text x="2.6" y="21" font-family="Liberation Sans" font-weight="700" font-size="9" fill="#fff" letter-spacing="-0.45">wikimee</text></svg>
<svg style="position:absolute;left:2705px;top:1618.0px;overflow:visible" width="36" height="36" viewBox="0 0 60 60"><circle cx="30" cy="30" r="30" fill="#e9a66b"/>
<clipPath id="av9"><circle cx="30" cy="30" r="30"/></clipPath>
<g clip-path="url(#av9)">
<ellipse cx="30" cy="61" rx="23" ry="16" fill="#73aee0"/>
<rect x="25.5" y="37" width="9" height="10" fill="#e4c8a8"/>
<path d="M24 45 L30 50 L36 45 L37 48 L30 53 L23 48 Z" fill="#fff"/>
<ellipse cx="19" cy="27" rx="2" ry="3" fill="#e4c8a8"/>
<ellipse cx="41" cy="27" rx="2" ry="3" fill="#e4c8a8"/>
<path d="M19 22 Q19 11 30 11 Q41 11 41 22 V30 Q41 42 30 42 Q19 42 19 30 Z" fill="#e6caa9"/>
<path d="M18.5 24 Q18 10 30 10 Q42 10 41.5 24 Q40 15 30 15 Q20 15 18.5 24 Z" fill="#4a2f22"/>
<circle cx="25.5" cy="26" r="1.2" fill="#3a2a20"/><circle cx="34.5" cy="26" r="1.2" fill="#3a2a20"/><path d="M22.5 22.5 Q25.5 20.5 28 22 M32 22 Q34.5 20.5 37.5 22.5" stroke="#8a6a50" stroke-width="0.9" fill="none"/>
<path d="M26.5 34 Q30 37.5 33.5 34 Z" fill="#3a2a20"/>
</g></svg>
<div style="position:absolute;left:228px;top:1692px;width:2588px;height:116px;background:#fff;border-radius:5px 5px 0 0;"></div>
<div style="position:absolute;left:228px;top:1808px;width:2588px;height:2px;background:#dddddd;"></div>
<div style="position:absolute;left:254px;top:1736.0px;width:36px;height:36px;box-sizing:border-box;border:2px solid #7b7b7b;border-radius:50%;"></div>
<svg style="position:absolute;left:322px;top:1726px;overflow:visible" width="56" height="56" viewBox="0 0 56 56"><clipPath id="th10"><rect width="56" height="56" rx="4"/></clipPath><filter id="bl10" x="0" y="0" width="1" height="1"><feGaussianBlur stdDeviation="0.6"/></filter><g clip-path="url(#th10)"><g filter="url(#bl10)"><rect width="56" height="56" fill="#dfe6cc"/><rect width="5" height="56" fill="#9aa0a8"/><rect x="12" width="6" height="56" fill="#7ea05a"/><rect x="20" width="30" height="56" fill="#1e2a48"/><ellipse cx="36" cy="14" rx="10" ry="14" fill="#c9a892"/><rect x="50" width="6" height="56" fill="#5a7a40"/></g></g></svg>
<div class="t" style="left:394.7px;top:1739.3px;font-size:26px;line-height:26px;color:#222;font-weight:400;letter-spacing:-0.175px;">man-4000000_1280.jpg</div>
<div class="t" style="left:821.5px;top:1739.3px;font-size:26px;line-height:26px;color:#222;font-weight:400;letter-spacing:0.134px;">Arquivo</div>
<svg style="position:absolute;left:1050px;top:1742.5px;overflow:visible" width="27" height="21" viewBox="0 0 27 21"><path d="M10.7 19.8 H20.8 A5.3 5.3 0 0 0 20.8 9.3 L19.6 9.2 A8.95 8.95 0 1 0 10.7 19.8 Z" fill="none" stroke="#3a3bf3" stroke-width="1.9" stroke-linejoin="round"/></svg>
<div class="t" style="left:1193.0px;top:1739.3px;font-size:26px;line-height:26px;color:#222;font-weight:400;letter-spacing:-0.115px;">03 jan 24</div>
<div class="t" style="left:1421.0px;top:1739.3px;font-size:26px;line-height:26px;color:#222;font-weight:400;letter-spacing:-1.103px;">17 jan 25</div>
<div class="t" style="left:1649.1px;top:1739.3px;font-size:26px;line-height:26px;color:#222;font-weight:400;letter-spacing:-2.533px;">241.1 KB</div>
<div class="t" style="left:1877.2px;top:1739.3px;font-size:26px;line-height:26px;color:#222;font-weight:400;letter-spacing:-0.651px;">10 fev 24</div>
<div class="t" style="left:2105.5px;top:1739.3px;font-size:26px;line-height:26px;color:#222;font-weight:400;letter-spacing:-0.057px;">Fresh Start</div>
<div class="t" style="left:2435.3px;top:1739.3px;font-size:26px;line-height:26px;color:#222;font-weight:400;letter-spacing:0.021px;">Cepheus</div>
<svg style="position:absolute;left:2673px;top:1736.0px;overflow:visible" width="36" height="36" viewBox="0 0 36 36"><circle cx="18" cy="18" r="18" fill="#4049f5"/><text x="2.6" y="21" font-family="Liberation Sans" font-weight="700" font-size="9" fill="#fff" letter-spacing="-0.45">wikimee</text></svg>
<svg style="position:absolute;left:2705px;top:1736.0px;overflow:visible" width="36" height="36" viewBox="0 0 60 60"><circle cx="30" cy="30" r="30" fill="#e9a66b"/>
<clipPath id="av10"><circle cx="30" cy="30" r="30"/></clipPath>
<g clip-path="url(#av10)">
<ellipse cx="30" cy="61" rx="23" ry="16" fill="#73aee0"/>
<rect x="25.5" y="37" width="9" height="10" fill="#e4c8a8"/>
<path d="M24 45 L30 50 L36 45 L37 48 L30 53 L23 48 Z" fill="#fff"/>
<ellipse cx="19" cy="27" rx="2" ry="3" fill="#e4c8a8"/>
<ellipse cx="41" cy="27" rx="2" ry="3" fill="#e4c8a8"/>
<path d="M19 22 Q19 11 30 11 Q41 11 41 22 V30 Q41 42 30 42 Q19 42 19 30 Z" fill="#e6caa9"/>
<path d="M18.5 24 Q18 10 30 10 Q42 10 41.5 24 Q40 15 30 15 Q20 15 18.5 24 Z" fill="#4a2f22"/>
<circle cx="25.5" cy="26" r="1.2" fill="#3a2a20"/><circle cx="34.5" cy="26" r="1.2" fill="#3a2a20"/><path d="M22.5 22.5 Q25.5 20.5 28 22 M32 22 Q34.5 20.5 37.5 22.5" stroke="#8a6a50" stroke-width="0.9" fill="none"/>
<path d="M26.5 34 Q30 37.5 33.5 34 Z" fill="#3a2a20"/>
</g></svg>
<div style="position:absolute;left:1143px;top:389px;width:68px;height:67px;background:rgba(196,196,245,0.75);border-radius:50%;"></div>
<div style="position:absolute;left:1151px;top:397px;width:51px;height:49px;background:#4040fb;border-radius:50%;"></div>
<div class="t" style="left:1164.9px;top:400.0px;font-size:44px;line-height:44px;color:#fff;font-weight:400;letter-spacing:0px;">2</div>
<div style="position:absolute;left:2189px;top:12px;width:449px;height:683px;box-sizing:border-box;background:#fff;border:3px solid #3f40f5;border-radius:8px;box-shadow:0 0 14px 2px rgba(198,198,198,0.8);"></div>
<div style="position:absolute;left:2192px;top:30px;width:443px;height:72px;background:#f4f4f4;"></div>
<svg style="position:absolute;left:2208px;top:52px;overflow:visible" width="36" height="26" viewBox="0 0 36 26"><path d="M3.8 13.6 L13 22.8 L31.5 3.4" fill="none" stroke="#1f1f1f" stroke-width="3.1" stroke-linecap="round" stroke-linejoin="round"/></svg>
<div class="t" style="left:2262.0px;top:50.0px;font-size:26px;line-height:26px;color:#1f1f1f;font-weight:400;letter-spacing:0px;">Título do arquivo</div>
<div class="t" style="left:2262.0px;top:118.0px;font-size:26px;line-height:26px;color:#1f1f1f;font-weight:400;letter-spacing:0px;">Criativo</div>
<div class="t" style="left:2262.0px;top:182.2px;font-size:26px;line-height:26px;color:#1f1f1f;font-weight:400;letter-spacing:0px;">Publicadas</div>
<div class="t" style="left:2262.0px;top:246.3px;font-size:26px;line-height:26px;color:#1f1f1f;font-weight:400;letter-spacing:0px;">Início</div>
<div class="t" style="left:2262.0px;top:310.0px;font-size:26px;line-height:26px;color:#1f1f1f;font-weight:400;letter-spacing:0px;">Fim</div>
<div class="t" style="left:2262.0px;top:374.0px;font-size:26px;line-height:26px;color:#1f1f1f;font-weight:400;letter-spacing:0px;">Tamanho</div>
<div class="t" style="left:2262.0px;top:437.5px;font-size:26px;line-height:26px;color:#1f1f1f;font-weight:400;letter-spacing:0px;">Criado em</div>
<div class="t" style="left:2262.0px;top:501.3px;font-size:26px;line-height:26px;color:#1f1f1f;font-weight:400;letter-spacing:0px;">Iniciativa</div>
<div class="t" style="left:2262.0px;top:565.2px;font-size:26px;line-height:26px;color:#1f1f1f;font-weight:400;letter-spacing:0px;">Workspace</div>
<div class="t" style="left:2262.0px;top:629.0px;font-size:26px;line-height:26px;color:#1f1f1f;font-weight:400;letter-spacing:0px;">Responsável</div>
</body></html>
